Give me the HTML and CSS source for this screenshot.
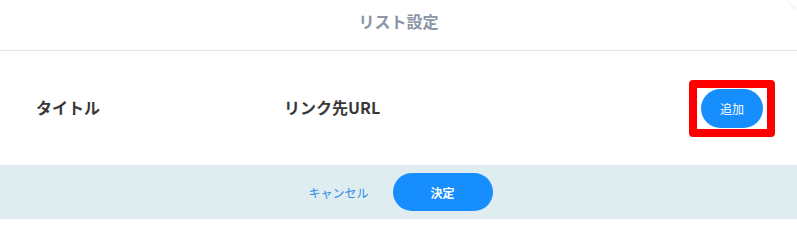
FILE: index.html
```html
<!DOCTYPE html>
<html lang="ja">
<head>
<meta charset="utf-8">
<title>リスト設定</title>
<link rel="stylesheet" href="styles.css">
</head>
<body>
<div class="modal">
  <span class="close-knob"></span>
  <header class="modal-header">
    <h1 class="modal-title">リスト設定</h1>
  </header>
  <section class="modal-body">
    <div class="col col-title">タイトル</div>
    <div class="col col-url">リンク先URL</div>
    <div class="highlight">
      <button class="btn btn-add" type="button">追加</button>
    </div>
  </section>
  <footer class="modal-footer">
    <button class="btn-link" type="button">キャンセル</button>
    <button class="btn btn-ok" type="button">決定</button>
  </footer>
</div>
</body>
</html>
```
FILE: styles.css
```css
html, body {
  margin: 0;
  padding: 0;
  background: #ffffff;
}
body {
  font-family: "Noto Sans CJK JP", "Open Sans", "Noto Sans", sans-serif;
  overflow: hidden;
}
.modal {
  position: relative;
  width: 797px;
  height: 219px;
  background: #ffffff;
  overflow: hidden;
}
.close-knob {
  position: absolute;
  top: -25px;
  right: -23px;
  width: 34px;
  height: 34px;
  border-radius: 50%;
  background: #ffffff;
  box-shadow: 0 0 3px rgba(0, 0, 0, 0.12);
}
.modal-header {
  height: 51px;
  box-sizing: border-box;
  border-bottom: 1px solid #e3e3e3;
  display: flex;
  justify-content: center;
  align-items: flex-start;
  padding-top: 11px;
}
.modal-title {
  margin: 0;
  font-size: 16px;
  line-height: 20px;
  font-weight: 700;
  color: #8b95a7;
}
.modal-body {
  height: 114px;
  display: flex;
  align-items: center;
  padding-left: 36px;
  padding-right: 22px;
  box-sizing: border-box;
}
.col {
  font-size: 16px;
  font-weight: 700;
  color: #383838;
  line-height: 20px;
  margin-bottom: 3px;
}
.col-title {
  width: 248px;
}
.col-url {
  flex: 1;
}
.highlight {
  border: 8px solid #ff0000;
  border-radius: 4px;
  padding: 1px 4px;
  margin-top: 1px;
  display: flex;
}
.btn {
  border: none;
  background: #168efe;
  color: #ffffff;
  font-family: inherit;
  cursor: pointer;
  padding: 0;
}
.btn-add {
  width: 62px;
  height: 39px;
  border-radius: 20px;
  font-size: 12px;
  font-weight: 400;
}
.modal-footer {
  height: 54px;
  box-sizing: border-box;
  background: #dfecf0;
  display: flex;
  justify-content: center;
  align-items: center;
  gap: 24px;
  padding-left: 4px;
}
.btn-link {
  border: none;
  background: transparent;
  color: #2f8de4;
  font-family: inherit;
  font-size: 12px;
  padding: 0;
  cursor: pointer;
}
.btn-ok {
  width: 100px;
  height: 38px;
  border-radius: 19px;
  font-size: 12px;
  font-weight: 700;
}
```
